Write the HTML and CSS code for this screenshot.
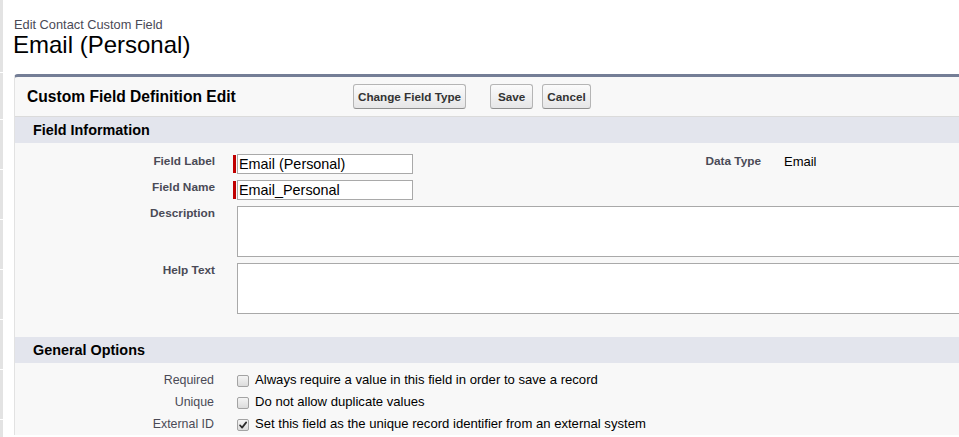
FILE: index.html
```html
<!DOCTYPE html>
<html lang="en">
<head>
<meta charset="utf-8">
<title>Edit Contact Custom Field</title>
<link rel="stylesheet" href="styles.css">
</head>
<body>
<div class="page">
  <div class="edge">
    <span class="seg seg-first"></span>
    <span class="seg seg-mid"></span>
    <span class="seg"></span>
    <span class="seg"></span>
    <span class="seg"></span>
    <span class="seg"></span>
    <span class="seg"></span>
    <span class="seg"></span>
    <span class="seg"></span>
  </div>
  <div class="main">
    <div class="ptype">Edit Contact Custom Field</div>
    <h1 class="ptitle">Email (Personal)</h1>

    <div class="block">
      <div class="bhead">
        <h2 class="btitle">Custom Field Definition Edit</h2>
        <div class="btns">
          <button class="btn" type="button">Change Field Type</button>
          <button class="btn btn-save" type="button">Save</button>
          <button class="btn btn-cancel" type="button">Cancel</button>
        </div>
      </div>

      <h3 class="sub">Field Information</h3>
      <div class="fields">
        <div class="lbl">Field Label</div>
        <div class="val"><span class="req"><span class="reqbar"></span><input class="txt" type="text" value="Email (Personal)"></span></div>
        <div class="lbl">Data Type</div>
        <div class="val val-data">Email</div>

        <div class="lbl">Field Name</div>
        <div class="val"><span class="req"><span class="reqbar"></span><input class="txt" type="text" value="Email_Personal"></span></div>
        <div class="empty"></div>
        <div class="empty"></div>

        <div class="lbl">Description</div>
        <div class="val val-wide"><textarea class="area"></textarea></div>

        <div class="lbl">Help Text</div>
        <div class="val val-wide"><textarea class="area"></textarea></div>
      </div>

      <h3 class="sub">General Options</h3>
      <div class="opts">
        <div class="olbl">Required</div>
        <div class="oval"><span class="cb"></span><span class="otext">Always require a value in this field in order to save a record</span></div>

        <div class="olbl">Unique</div>
        <div class="oval"><span class="cb"></span><span class="otext">Do not allow duplicate values</span></div>

        <div class="olbl">External ID</div>
        <div class="oval"><span class="cb cb-on"><svg viewBox="0 0 12 12" width="12" height="12"><path d="M3 6.3 L5.1 8.6 L9.2 3.4" fill="none" stroke="#2b2b2b" stroke-width="1.7" stroke-linecap="round" stroke-linejoin="round"/></svg></span><span class="otext">Set this field as the unique record identifier from an external system</span></div>
      </div>
    </div>
  </div>
</div>
</body>
</html>
```
FILE: styles.css
```css
html, body {
  margin: 0;
  padding: 0;
  background: #ffffff;
  overflow: hidden;
  font-family: "Liberation Sans", Arial, sans-serif;
}

.page {
  display: flex;
  align-items: flex-start;
  width: 959px;
  height: 437px;
  overflow: hidden;
}

.edge {
  width: 3px;
  flex: 0 0 3px;
  display: flex;
  flex-direction: column;
  gap: 1px;
  overflow: hidden;
  height: 437px;
}

.seg {
  display: block;
  flex: 0 0 49px;
  background: #e3e3e3;
}

.seg-first {
  flex-basis: 72px;
}

.seg-mid {
  flex-basis: 46px;
}

.main {
  margin-left: 11px;
  padding-top: 18px;
  flex: 1 1 auto;
  min-width: 0;
  overflow: hidden;
}

.ptype {
  font-size: 12.8px;
  line-height: 14px;
  color: #4a4a56;
}

.ptitle {
  margin: 0;
  font-size: 24px;
  line-height: 26px;
  font-weight: normal;
  color: #000;
  margin-left: -1px;
}

.block {
  margin-top: 16px;
  border-top: 3px solid #747e96;
  border-left: 1px solid #e2e2e2;
  border-top-left-radius: 4px;
  background: #f8f8f8;
  overflow: hidden;
}

.bhead {
  height: 39px;
  display: flex;
  align-items: center;
  border-bottom: 1px solid #dbdbdb;
  padding-left: 12px;
}

.btitle {
  margin: 0;
  width: 326px;
  font-size: 15.6px;
  font-weight: bold;
  color: #000;
}

.btns {
  display: flex;
  align-items: center;
}

.btn {
  height: 25px;
  margin: 0;
  padding: 0 4px;
  border: 1px solid #b5b5b5;
  border-bottom-color: #8f8f8f;
  border-radius: 3px;
  background: linear-gradient(#fbfbfb, #e6e6e7);
  color: #333;
  font-family: "Liberation Sans", Arial, sans-serif;
  font-size: 11.7px;
  font-weight: bold;
}

.btn-save {
  margin-left: 24px;
  padding: 0 7px;
}

.btn-cancel {
  margin-left: 9px;
}

.sub {
  margin: 0;
  height: 26px;
  line-height: 26px;
  padding-left: 18px;
  background: #e3e5ed;
  font-size: 14.4px;
  font-weight: bold;
  color: #000;
}

.fields {
  display: grid;
  grid-template-columns: 200px 318px 228px 1fr;
  row-gap: 6px;
  padding: 11px 0 23px;
}

.lbl {
  text-align: right;
  font-size: 11.8px;
  font-weight: bold;
  line-height: 14px;
  color: #4a4a56;
}

.val {
  padding-left: 18px;
  font-size: 13px;
  line-height: 14px;
  color: #000;
}

.val-data {
  padding-left: 23px;
  padding-top: 1px;
}

.val-wide {
  grid-column: 2 / -1;
  padding-left: 22px;
}

.req {
  display: flex;
  align-items: center;
}

.reqbar {
  display: block;
  width: 3px;
  height: 18px;
  background: #c00000;
  margin-right: 1px;
}

.txt {
  box-sizing: border-box;
  width: 176px;
  height: 20px;
  margin: 0;
  padding: 0 1px;
  border: 1px solid #a9a9a9;
  background: #fff;
  color: #000;
  font-family: "Liberation Sans", Arial, sans-serif;
  font-size: 14.4px;
}

.area {
  display: block;
  box-sizing: border-box;
  width: 760px;
  height: 51px;
  margin: 0;
  padding: 1px;
  border: 1px solid #a9a9a9;
  background: #fff;
  resize: none;
  font-family: "Liberation Sans", Arial, sans-serif;
  font-size: 13px;
}

.opts {
  display: grid;
  grid-template-columns: 199px 1fr;
  grid-auto-rows: 22px;
  padding-top: 6px;
}

.olbl {
  text-align: right;
  font-size: 12.4px;
  line-height: 22px;
  color: #4a4a56;
}

.oval {
  display: flex;
  align-items: center;
  padding-left: 23px;
}

.cb {
  box-sizing: border-box;
  display: block;
  width: 12px;
  height: 12px;
  margin-top: 2px;
  border: 1px solid #a3a3a3;
  border-radius: 2px;
  background: linear-gradient(#f4f4f4, #dcdcdc);
  position: relative;
}

.cb svg {
  position: absolute;
  left: -1px;
  top: -1px;
}

.otext {
  margin-left: 6px;
  font-size: 13.1px;
  line-height: 22px;
  color: #000;
  white-space: nowrap;
}
```
